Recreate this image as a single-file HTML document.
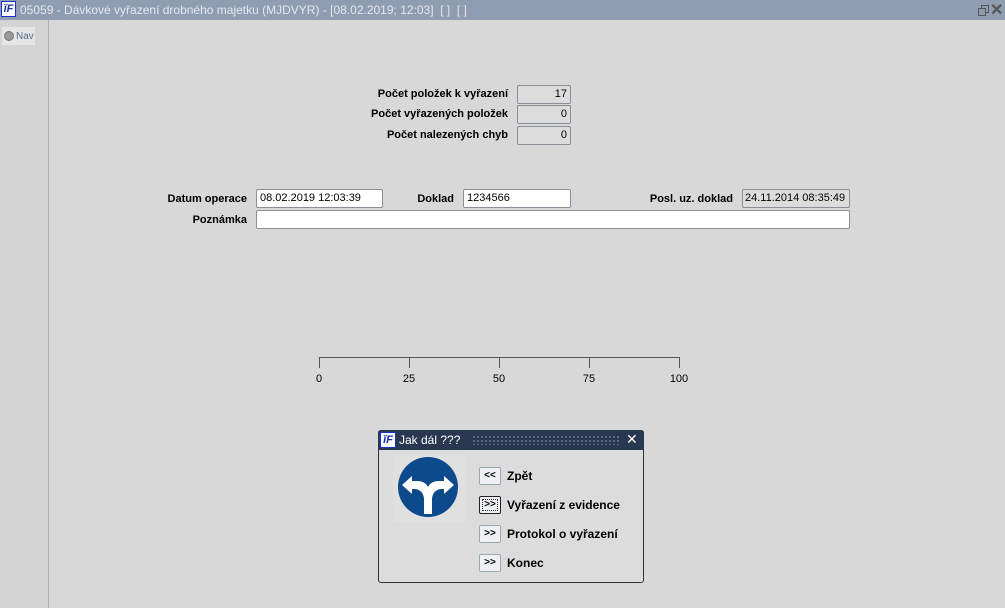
<!DOCTYPE html><html><head><style>
body{margin:0;width:1005px;height:608px;background:#d8d8d8;position:relative;overflow:hidden;font-family:"Liberation Sans",sans-serif;font-size:11px;color:#000}
.a{position:absolute}
.lb{position:absolute;font-weight:bold;text-align:right;white-space:nowrap}
.f{position:absolute;height:17px;border:1px solid #8a8f98;border-radius:2px;box-sizing:border-box;line-height:15px;padding:0 3px;background:#fff;white-space:nowrap;overflow:hidden}
.g{background:#dcdcdc;text-align:right}
.btn{position:absolute;left:479px;width:22px;height:18px;border:1px solid #9aa;background:#eef0f4;box-sizing:border-box;font-size:10px;font-weight:bold;text-align:center;line-height:16px;border-radius:2px}
.bl{position:absolute;left:507px;font-weight:bold;font-size:12px}
.tk{position:absolute;top:357px;width:1px;height:11px;background:#555}
.tl{position:absolute;top:373px;width:40px;text-align:center}
</style></head><body>
<div class="a" style="left:0;top:0;width:1005px;height:20px;background:#8e9db2"></div>
<div class="a" style="left:1px;top:1px;width:15px;height:16px;background:#fff;border:1px solid #1a2fd0;box-sizing:border-box;font:italic bold 11px 'Liberation Sans';color:#1a2fa0;line-height:14px;text-align:center">ĭF</div>
<div class="a" style="left:20px;top:3px;color:#e4e8ee;font-size:12px">05059 - Dávkové vyřazení drobného majetku (MJDVYR) - [08.02.2019; 12:03]&nbsp; [ ]&nbsp; [ ]</div>
<div class="a" style="left:981px;top:5px;width:6px;height:6px;border:1.5px solid #555"></div>
<div class="a" style="left:978px;top:8px;width:6px;height:6px;border:1.5px solid #555;background:#8e9db2"></div>
<div class="a" style="left:990px;top:0px;color:#555;font-size:16px;font-weight:bold">✕</div>
<div class="a" style="left:0;top:20px;width:48px;height:588px;background:#d4d4d4;border-right:1px solid #a8b0bc"></div>
<div class="a" style="left:2px;top:27px;width:33px;height:18px;background:#e6e6e6"></div>
<div class="a" style="left:4px;top:31px;width:8px;height:8px;border-radius:50%;background:#999;border:1px solid #777"></div>
<div class="a" style="left:16px;top:31px;color:#5a6a80;font-size:10px">Nav</div>

<div class="lb" style="right:497px;top:88px">Počet položek k vyřazení</div>
<div class="lb" style="right:497px;top:108px">Počet vyřazených položek</div>
<div class="lb" style="right:497px;top:129px">Počet nalezených chyb</div>
<div class="f g" style="left:517px;top:85px;width:54px;height:19px;line-height:17px">17</div>
<div class="f g" style="left:517px;top:105px;width:54px;height:19px;line-height:17px">0</div>
<div class="f g" style="left:517px;top:126px;width:54px;height:19px;line-height:17px">0</div>

<div class="lb" style="right:758px;top:193px">Datum operace</div>
<div class="lb" style="right:758px;top:214px">Poznámka</div>
<div class="lb" style="right:551px;top:193px">Doklad</div>
<div class="lb" style="right:272px;top:193px">Posl. uz. doklad</div>
<div class="f" style="left:256px;top:189px;width:127px;height:19px;line-height:17px">08.02.2019 12:03:39</div>
<div class="f" style="left:463px;top:189px;width:108px;height:19px;line-height:17px">1234566</div>
<div class="f g" style="left:742px;top:189px;width:108px;height:19px;line-height:17px;text-align:left;padding:0 2px">24.11.2014 08:35:49</div>
<div class="f" style="left:256px;top:210px;width:594px;height:19px"></div>

<div class="a" style="left:319px;top:357px;width:361px;height:1px;background:#555"></div>
<div class="tk" style="left:319px"></div><div class="tk" style="left:409px"></div><div class="tk" style="left:499px"></div><div class="tk" style="left:589px"></div><div class="tk" style="left:679px"></div>
<div class="tl" style="left:299px">0</div><div class="tl" style="left:389px">25</div><div class="tl" style="left:479px">50</div><div class="tl" style="left:569px">75</div><div class="tl" style="left:659px">100</div>

<div class="a" style="left:378px;top:430px;width:266px;height:153px;background:#dcdcdc;border:1px solid #333;box-sizing:border-box;border-radius:3px"></div>
<div class="a" style="left:378px;top:430px;width:266px;height:20px;background:#293850;border-radius:3px 3px 0 0"></div>
<div class="a" style="left:380px;top:432px;width:16px;height:16px;background:#fff;border:1px solid #1a2fd0;box-sizing:border-box;font:italic bold 11px 'Liberation Sans';color:#1a2fa0;line-height:14px;text-align:center">ĭF</div>
<div class="a" style="left:399px;top:433px;color:#fff;font-size:12px">Jak dál ???</div>
<div class="a" style="left:472px;top:435px;width:148px;height:10px;background-image:radial-gradient(#6a7890 0.8px,transparent 1px);background-size:4px 4px"></div>
<div class="a" style="left:626px;top:431px;color:#fff;font-size:14px">✕</div>
<div class="a" style="left:393px;top:455px;width:72px;height:67px;background:#e0e0e0"></div>
<svg class="a" style="left:395px;top:454px" width="66" height="66" viewBox="0 0 66 66"><circle cx="33" cy="33" r="30" fill="#0c4a8c"/><path d="M29 60V46Q29 37 21 35H17V40L7 31L17 22V27H22Q30 27 33 33Q36 27 44 27H49V22L59 31L49 40V35H45Q37 37 37 46V60Z" fill="#fff"/></svg>
<div class="btn" style="top:467px">&lt;&lt;</div><div class="bl" style="top:469px">Zpět</div>
<div class="btn" style="top:496px;border:1px solid #222;outline:1px dotted #333;outline-offset:-4px">&gt;&gt;</div><div class="bl" style="top:498px">Vyřazení z evidence</div>
<div class="btn" style="top:525px">&gt;&gt;</div><div class="bl" style="top:527px">Protokol o vyřazení</div>
<div class="btn" style="top:554px">&gt;&gt;</div><div class="bl" style="top:556px">Konec</div>
</body></html>
